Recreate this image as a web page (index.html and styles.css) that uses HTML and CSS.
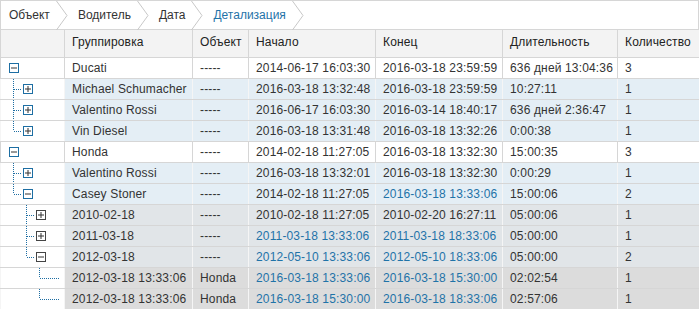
FILE: index.html
```html
<!DOCTYPE html>
<html lang="ru">
<head>
<meta charset="utf-8">
<link rel="stylesheet" href="styles.css">
</head>
<body>
<div class="crumbs">
  <span class="crumb">Объект</span>
  <svg class="sep" width="12" height="29" viewBox="0 0 12 29"><polyline points="0.5,0 11,14.5 0.5,29" fill="none" stroke="#c8c8c8"/></svg>
  <span class="crumb">Водитель</span>
  <svg class="sep" width="12" height="29" viewBox="0 0 12 29"><polyline points="0.5,0 11,14.5 0.5,29" fill="none" stroke="#c8c8c8"/></svg>
  <span class="crumb">Дата</span>
  <svg class="sep" width="12" height="29" viewBox="0 0 12 29"><polyline points="0.5,0 11,14.5 0.5,29" fill="none" stroke="#c8c8c8"/></svg>
  <span class="crumb active">Детализация</span>
  <svg class="sep" width="12" height="29" viewBox="0 0 12 29"><polyline points="0.5,0 11,14.5 0.5,29" fill="none" stroke="#c8c8c8"/></svg>
</div>
<table class="grid">
  <colgroup>
    <col class="c-tree"><col class="c-group"><col class="c-obj"><col class="c-date"><col class="c-date"><col class="c-dur"><col class="c-cnt">
  </colgroup>
  <thead>
    <tr><th></th><th>Группировка</th><th>Объект</th><th>Начало</th><th>Конец</th><th>Длительность</th><th>Количество</th></tr>
  </thead>
  <tbody>
    <tr class="l1">
      <td class="tree"><svg width="64" height="20"><rect x="8.5" y="5.5" width="9" height="9" fill="#fff" stroke="#1d6ea3"/><line x1="10" y1="10" x2="16" y2="10" stroke="#333"/></svg></td>
      <td>Ducati</td><td>-----</td><td>2014-06-17 16:03:30</td><td>2016-03-18 23:59:59</td><td>636 дней 13:04:36</td><td>3</td>
    </tr>
    <tr class="l2">
      <td class="tree"><svg width="64" height="20"><line x1="12.5" y1="0" x2="12.5" y2="21" stroke="#1d6ea3" stroke-dasharray="1 1"/><line x1="13" y1="10.5" x2="21" y2="10.5" stroke="#1d6ea3" stroke-dasharray="1 1"/><rect x="22.5" y="5.5" width="9" height="9" fill="#fff" stroke="#1d6ea3"/><line x1="24" y1="10" x2="30" y2="10" stroke="#333"/><line x1="27" y1="7" x2="27" y2="13" stroke="#333"/></svg></td>
      <td>Michael Schumacher</td><td>-----</td><td>2016-03-18 13:32:48</td><td>2016-03-18 23:59:59</td><td>10:27:11</td><td>1</td>
    </tr>
    <tr class="l2">
      <td class="tree"><svg width="64" height="20"><line x1="12.5" y1="0" x2="12.5" y2="21" stroke="#1d6ea3" stroke-dasharray="1 1"/><line x1="13" y1="10.5" x2="21" y2="10.5" stroke="#1d6ea3" stroke-dasharray="1 1"/><rect x="22.5" y="5.5" width="9" height="9" fill="#fff" stroke="#1d6ea3"/><line x1="24" y1="10" x2="30" y2="10" stroke="#333"/><line x1="27" y1="7" x2="27" y2="13" stroke="#333"/></svg></td>
      <td>Valentino Rossi</td><td>-----</td><td>2016-06-17 16:03:30</td><td>2016-03-14 18:40:17</td><td>636 дней 2:36:47</td><td>1</td>
    </tr>
    <tr class="l2">
      <td class="tree"><svg width="64" height="20"><line x1="12.5" y1="0" x2="12.5" y2="10" stroke="#1d6ea3" stroke-dasharray="1 1"/><line x1="13" y1="10.5" x2="21" y2="10.5" stroke="#1d6ea3" stroke-dasharray="1 1"/><rect x="22.5" y="5.5" width="9" height="9" fill="#fff" stroke="#1d6ea3"/><line x1="24" y1="10" x2="30" y2="10" stroke="#333"/><line x1="27" y1="7" x2="27" y2="13" stroke="#333"/></svg></td>
      <td>Vin Diesel</td><td>-----</td><td>2016-03-18 13:31:48</td><td>2016-03-18 13:32:26</td><td>0:00:38</td><td>1</td>
    </tr>
    <tr class="l1">
      <td class="tree"><svg width="64" height="20"><rect x="8.5" y="5.5" width="9" height="9" fill="#fff" stroke="#1d6ea3"/><line x1="10" y1="10" x2="16" y2="10" stroke="#333"/></svg></td>
      <td>Honda</td><td>-----</td><td>2014-02-18 11:27:05</td><td>2016-03-18 13:32:30</td><td>15:00:35</td><td>3</td>
    </tr>
    <tr class="l2">
      <td class="tree"><svg width="64" height="20"><line x1="12.5" y1="0" x2="12.5" y2="21" stroke="#1d6ea3" stroke-dasharray="1 1"/><line x1="13" y1="10.5" x2="21" y2="10.5" stroke="#1d6ea3" stroke-dasharray="1 1"/><rect x="22.5" y="5.5" width="9" height="9" fill="#fff" stroke="#1d6ea3"/><line x1="24" y1="10" x2="30" y2="10" stroke="#333"/><line x1="27" y1="7" x2="27" y2="13" stroke="#333"/></svg></td>
      <td>Valentino Rossi</td><td>-----</td><td>2016-03-18 13:32:01</td><td>2016-03-18 13:32:30</td><td>0:00:29</td><td>1</td>
    </tr>
    <tr class="l2">
      <td class="tree"><svg width="64" height="20"><line x1="12.5" y1="0" x2="12.5" y2="10" stroke="#1d6ea3" stroke-dasharray="1 1"/><line x1="13" y1="10.5" x2="21" y2="10.5" stroke="#1d6ea3" stroke-dasharray="1 1"/><rect x="22.5" y="5.5" width="9" height="9" fill="#fff" stroke="#1d6ea3"/><line x1="24" y1="10" x2="30" y2="10" stroke="#333"/></svg></td>
      <td>Casey Stoner</td><td>-----</td><td>2014-02-18 11:27:05</td><td class="link">2016-03-18 13:33:06</td><td>15:00:06</td><td>2</td>
    </tr>
    <tr class="l3">
      <td class="tree"><svg width="64" height="20"><line x1="25.5" y1="0" x2="25.5" y2="21" stroke="#1d6ea3" stroke-dasharray="1 1"/><line x1="26" y1="10.5" x2="34" y2="10.5" stroke="#1d6ea3" stroke-dasharray="1 1"/><rect x="35.5" y="5.5" width="9" height="9" fill="#fff" stroke="#444"/><line x1="37" y1="10" x2="43" y2="10" stroke="#333"/><line x1="40" y1="7" x2="40" y2="13" stroke="#333"/></svg></td>
      <td>2010-02-18</td><td>-----</td><td>2010-02-18 11:27:05</td><td>2010-02-20 16:27:11</td><td>05:00:06</td><td>1</td>
    </tr>
    <tr class="l3">
      <td class="tree"><svg width="64" height="20"><line x1="25.5" y1="0" x2="25.5" y2="21" stroke="#1d6ea3" stroke-dasharray="1 1"/><line x1="26" y1="10.5" x2="34" y2="10.5" stroke="#1d6ea3" stroke-dasharray="1 1"/><rect x="35.5" y="5.5" width="9" height="9" fill="#fff" stroke="#444"/><line x1="37" y1="10" x2="43" y2="10" stroke="#333"/><line x1="40" y1="7" x2="40" y2="13" stroke="#333"/></svg></td>
      <td>2011-03-18</td><td>-----</td><td class="link">2011-03-18 13:33:06</td><td class="link">2011-03-18 18:33:06</td><td>05:00:00</td><td>1</td>
    </tr>
    <tr class="l3">
      <td class="tree"><svg width="64" height="20"><line x1="25.5" y1="0" x2="25.5" y2="10" stroke="#1d6ea3" stroke-dasharray="1 1"/><line x1="26" y1="10.5" x2="34" y2="10.5" stroke="#1d6ea3" stroke-dasharray="1 1"/><rect x="35.5" y="5.5" width="9" height="9" fill="#fff" stroke="#444"/><line x1="37" y1="10" x2="43" y2="10" stroke="#333"/></svg></td>
      <td>2012-03-18</td><td>-----</td><td class="link">2012-05-10 13:33:06</td><td class="link">2012-05-10 18:33:06</td><td>05:00:00</td><td>2</td>
    </tr>
    <tr class="l4">
      <td class="tree"><svg width="64" height="20"><line x1="38.5" y1="0" x2="38.5" y2="10" stroke="#1d6ea3" stroke-dasharray="1 1"/><line x1="39" y1="10.5" x2="58" y2="10.5" stroke="#1d6ea3" stroke-dasharray="1 1"/></svg></td>
      <td>2012-03-18 13:33:06</td><td>Honda</td><td class="link">2016-03-18 13:33:06</td><td class="link">2016-03-18 15:30:00</td><td>02:02:54</td><td>1</td>
    </tr>
    <tr class="l4">
      <td class="tree"><svg width="64" height="20"><line x1="38.5" y1="0" x2="38.5" y2="10" stroke="#1d6ea3" stroke-dasharray="1 1"/><line x1="39" y1="10.5" x2="58" y2="10.5" stroke="#1d6ea3" stroke-dasharray="1 1"/></svg></td>
      <td>2012-03-18 13:33:06</td><td>Honda</td><td class="link">2016-03-18 15:30:00</td><td class="link">2016-03-18 18:33:06</td><td>02:57:06</td><td>1</td>
    </tr>
  </tbody>
</table>
</body>
</html>
```

FILE: styles.css
```css
html, body {
  margin: 0;
  padding: 0;
  background: #fff;
}
body {
  font-family: "Liberation Sans", Arial, sans-serif;
  font-size: 12px;
  color: #333;
  width: 699px;
  overflow: hidden;
}
.crumbs {
  display: flex;
  align-items: center;
  height: 29px;
  border: 1px solid #d6d6d6;
  border-bottom: none;
  box-sizing: border-box;
  padding-left: 8px;
}
.crumb {
  color: #333;
  white-space: nowrap;
}
.crumb.active {
  color: #1f73a8;
}
.sep {
  display: block;
  margin: 0 10px 0 6px;
  flex: none;
}
.grid {
  border-collapse: collapse;
  table-layout: fixed;
  width: 699px;
}
.c-tree { width: 64px; }
.c-group { width: 128px; }
.c-obj { width: 56px; }
.c-date { width: 127px; }
.c-dur { width: 115px; }
.c-cnt { width: 82px; }
.grid th, .grid td {
  border: 1px solid #d6d6d6;
  padding: 0 0 0 7px;
  text-align: left;
  white-space: nowrap;
  overflow: hidden;
  letter-spacing: 0.15px;
}
.grid th {
  height: 28px;
  box-sizing: border-box;
  padding-bottom: 3px;
  background: #f3f3f3;
  font-weight: normal;
  color: #222;
}
.grid td {
  height: 20px;
}
.grid td.tree {
  padding: 0;
  background: #fff;
  vertical-align: top;
}
.tree svg { display: block; }
.l2 td { background: #e4eef5; }
.l3 td { background: #e1e5e8; }
.l4 td { background: #dcdcdc; }
.l2 td, .l3 td, .l4 td {
  border-color: #d6d6d6 #f5f5f5;
}
.grid td.link { color: #1f73a8; }
```
